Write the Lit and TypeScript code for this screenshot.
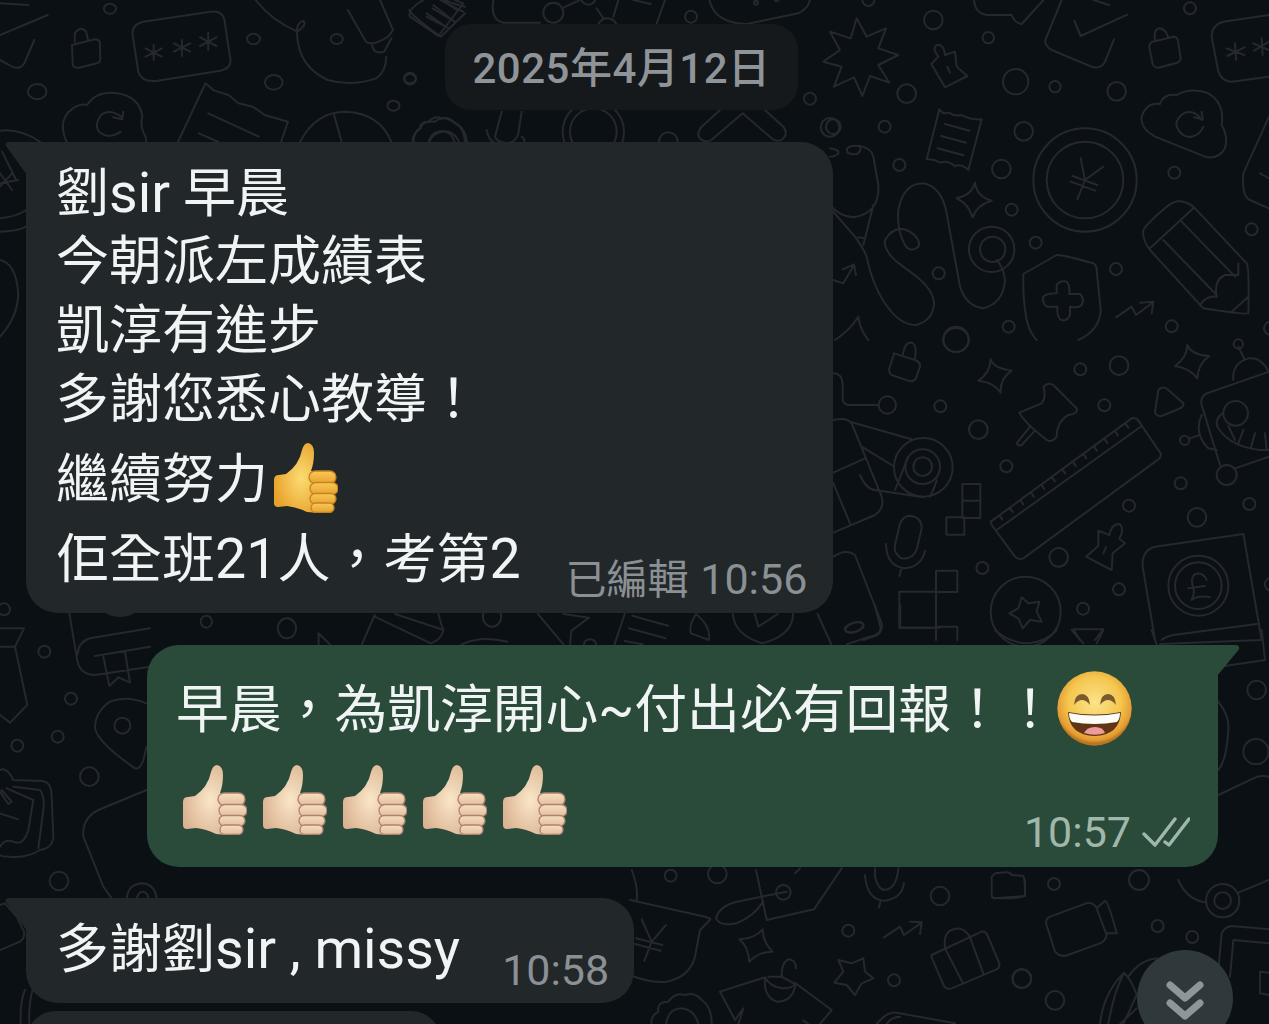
import { LitElement, html, css, svg } from "lit";
import { customElement } from "lit/decorators.js";

type Group = { x: number; y: number; sx?: number; sy?: number; d: string; c?: number[][]; e?: number[][] };

const rulerTicks = Array.from({ length: 13 }, (_, i) => {
  const x = 508 + i * 31.5;
  const y = 526 - i * 23;
  return `M${x} ${y} L${x + 9} ${y + 13}`;
}).join(" ");

const groups: Group[] = [
  // top left
  { x: 0, y: 0, sx: 2.473, sy: 3,
    d: `M0 105 L118 45 M85 120 L60 190 Q50 210 30 200 L0 180 M0 10 L70 15
    M178 135 L235 118 Q245 118 247 128 L248 178 Q248 188 240 190 L195 203 Q182 204 180 195 Z M185 125 L185 100 Q200 75 213 95 L218 122
    M355 65 L520 35 Q550 30 555 60 L570 180 Q572 205 545 212 L390 242 Q350 248 342 215 L328 105 Q325 72 355 65Z
    M380 135 L380 180 M360 145 L400 170 M400 145 L360 170 M450 120 L450 168 M430 130 L470 155 M470 130 L430 155 M515 98 L515 150 M495 112 L535 138 M535 112 L495 138
    M165 426 Q140 360 180 325 Q200 310 215 315 Q240 270 290 280 Q345 290 352 350 Q345 380 360 410 L362 426
    M300 350 Q270 325 250 345 Q232 375 245 395 Q270 420 298 395 M305 335 L302 358 L280 352
    M440 426 L508 250 L530 272 L565 285 L590 310 L625 320 L655 345 L712 365 L695 426 M515 340 L640 410 M492 400 L540 426
    M742 426 Q780 335 855 335 Q940 340 968 426 M825 340 L845 426
    M632 0 Q670 60 735 95 Q760 75 750 62 Q730 70 735 110 Q740 200 810 240 Q870 260 930 235 Q955 215 955 170
    M860 30 L905 125 Q920 140 960 110 L972 90 L940 0 M920 135 Q925 165 950 155 L968 115
    M1020 426 Q1020 400 1040 385 Q1045 360 1075 365 Q1095 345 1120 365 Q1150 380 1155 426 M1060 426 Q1075 390 1110 395 Q1130 405 1135 426
    M1012 30 Q1020 50 1090 110 L1150 40 M1055 50 L1110 85 M1070 25 L1125 65 M1090 0 L1145 35 M1100 0 Q1130 15 1150 20
    M0 392 Q50 385 100 426 M0 560 L30 520 M0 520 L30 570 M5 455 L40 540 M0 550 L45 540
    M0 655 Q40 650 65 630 M0 695 Q40 695 65 680
    M0 780 Q40 790 45 880 Q45 950 0 1010`,
    c: [[272, 26, 15], [627, 117, 16], [833, 117, 15], [677, 247, 22], [1014, 236, 14], [92, 275, 23], [973, 317, 15]] },
  // zone under the date chip
  { x: 400, y: 0,
    d: `M70 0 Q20 30 30 50 L115 108 L190 10 L165 0 M80 40 L130 75 M100 15 L150 55 M125 0 L170 30
    M280 0 Q270 60 310 68 L420 68 M485 25 L540 0 M590 25 L610 55 M655 0 L640 50 M700 0 L752 12 M795 0 L770 70
    M928 0 Q945 70 1040 72 L1195 40 Q1225 25 1230 0
    M40 435 Q40 395 60 385 Q60 365 85 365 Q105 345 125 355 Q150 350 165 370 Q195 385 195 435 M85 435 Q90 395 125 393 Q160 395 165 435
    M260 390 Q265 420 285 430 M305 335 L285 410 Q290 425 320 430 Q350 425 355 400 L365 335 M365 410 Q378 420 370 430
    M960 330 L905 380 Q885 405 905 420 Q925 430 940 415 L1028 340 L1115 415 Q1135 430 1150 415 Q1165 400 1150 380 L1095 330`,
    c: [[460, 38, 30], [622, 85, 30], [873, 50, 18], [30, 236, 18], [1230, 296, 18], [1290, 382, 28], [805, 425, 28], [565, -8, 22], [580, 395, 92], [580, 395, 70], [1068, 8, 6], [1130, -2, 6]] },
  // top right
  { x: 830, y: 0,
    d: `M80 55 L110 110 L168 85 L145 145 L205 165 L145 195 L178 248 L120 228 L97 288 L72 232 L12 260 L35 200 L-20 185 L30 150 L0 95 L62 115Z
    M304 192 L345 262 L412 228 L380 200 L375 155 L345 165 Q340 130 320 135 Q305 145 325 170 Z M352 200 L360 218
    M328 328 Q340 345 355 338 Q375 350 395 345 Q420 360 455 358 L415 510 Q395 490 375 498 Q350 480 330 488 Q310 475 290 478 Z M345 372 L418 392 M333 408 L408 428 M323 445 L400 466
    M752 475 L765 540 L820 500 M765 540 L742 598 M728 528 L802 555 M722 545 L795 572
    M990 312 Q1000 280 1040 285 Q1080 262 1130 278 Q1185 305 1175 375 Q1195 410 1185 445 Q1165 480 1125 470 L975 410 Q930 385 935 350 Q950 305 990 312Z
    M1115 360 Q1095 330 1065 338 Q1035 355 1040 380 Q1055 415 1085 410 Q1110 405 1120 380 M1115 335 L1118 358 L1092 352
    M968 125 L1030 110 Q1042 110 1044 122 L1052 175 Q1052 185 1042 188 L985 203 Q972 203 968 192 L958 142 Q958 128 968 125 M975 120 Q970 85 990 85 Q1010 90 1015 115
    M1180 65 L1317 45 M1180 65 Q1145 75 1145 110 L1165 215 Q1175 245 1205 245 L1317 230
    M1215 130 L1218 180 M1190 145 L1243 165 M1243 142 L1192 168 M1295 115 L1298 165 M1270 130 L1317 150 M1317 125 L1272 152
    M695 0 L648 115 Q640 135 665 150 L790 202 Q815 205 825 185 L852 118 M733 62 L752 108 L892 44 M790 0 L838 15
    M432 0 Q435 40 470 45 L545 45 Q555 70 575 72 L640 0
    M0 445 Q30 450 25 460 Q15 470 0 470 M52 445 Q60 435 90 438 Q125 445 130 470 L145 555 Q150 640 70 652 Q30 650 0 615 M52 445 Q45 465 80 462 Q95 455 90 438
    M130 615 L100 735 M5 630 L75 710 Q100 745 110 770 Q130 870 180 930 Q215 975 260 975 Q310 960 312 910 Q310 870 260 830 L200 785 Q160 750 165 720 Q195 670 240 695 Q275 720 265 740 Q240 760 225 735 Q200 690 205 630 Q220 550 280 550 Q335 560 350 640 L390 860 Q410 920 460 925 Q520 910 525 840 Q520 800 500 780
    M85 712 L105 715
    M435 548 Q440 590 485 602 Q440 615 428 652 Q415 610 380 595 Q425 585 435 548Z
    M580 822 L680 765 Q690 762 790 790 Q800 795 800 810 L812 930 Q810 990 745 1020 M580 822 Q578 900 590 960 Q600 1000 620 1020
    M680 880 L680 855 Q690 840 710 845 Q720 855 718 882 L750 882 Q765 895 755 915 Q745 925 720 920 L720 945 Q710 965 695 960 Q680 955 682 920 L650 920 Q635 905 640 890 Q650 880 680 880Z
    M858 952 L905 920 L918 945 L968 908 M930 908 L970 905 L965 940
    M10 840 L40 850 L72 795 M38 808 L72 793 L78 825
    M1045 603 Q1075 605 1095 625 L1250 790 Q1258 800 1255 940 Q1250 945 1120 925 L960 750 Q935 715 940 690 Q950 670 1010 620 Q1030 605 1045 603Z
    M960 745 L1090 625 M1000 720 L1160 885 M1055 665 L1215 830 M1110 915 Q1130 885 1160 890 Q1150 840 1185 825 L1225 825 L1225 790 M1205 935 L1255 890
    M1317 350 L1240 520 Q1235 590 1260 600 L1317 625 M1290 520 L1317 535
    M15 1020 Q60 990 85 950 Q90 990 115 1020`,
    c: [[310, 60, 28], [475, 113, 17], [230, 281, 28], [557, 245, 38], [675, 260, 17], [860, 274, 28], [1080, 25, 18], [115, 0, 18], [164, 380, 18], [10, 380, 22], [208, 495, 18], [581, 394, 28], [514, 507, 28], [545, 629, 18], [617, 728, 18], [326, 820, 18], [858, 807, 18], [1033, 518, 18], [1265, 688, 18], [536, 980, 18], [1025, 979, 18], [378, 1018, 38], [765, 540, 155], [765, 540, 115], [485, 748, 68], [488, 748, 38], [1322, 985, 20]] },
  // right middle
  { x: 830, y: 340,
    d: `M192 40 L260 62 Q272 70 270 80 L258 115 Q250 128 235 122 L185 105 Q175 98 178 85 L190 48 Z M218 45 Q225 5 245 8 Q262 15 255 55
    M482 58 Q490 85 545 92 Q510 115 512 158 Q490 125 445 122 Q480 100 482 58Z
    M1072 15 Q1085 45 1138 48 Q1105 70 1102 115 Q1080 85 1035 78 Q1070 55 1072 15Z
    M568 218 L635 190 Q650 170 640 140 Q655 125 670 135 L740 205 Q745 222 715 225 Q680 245 680 290 Q665 310 650 300 Q580 245 568 218Z M600 260 L560 310 Q565 320 575 315 L612 275
    M985 150 Q1000 135 1015 150 L1060 190 Q1062 200 1050 205 L995 228 Q978 230 975 215 Z
    M482 545 L905 235 Q918 232 925 242 L992 340 Q995 350 985 358 L580 655 Q565 660 555 650 L485 555 Z M500 570 L935 258 ${rulerTicks}
    M397 432 H451 V482 H397Z M397 482 H451 V534 H397Z M349 532 H403 V584 H349Z
    M238 527 Q275 530 275 565 L260 630 Q245 660 215 655 Q190 640 195 615 L210 550 Q220 528 238 527Z M168 612 Q170 680 225 685 Q275 680 285 632 M215 685 L208 708
    M318 692 H382 V756 H318Z M208 755 H318 V863 H208Z M318 755 L318 900 M318 860 L382 860 L382 900
    M575 772 L595 790 L628 785 L620 815 L635 845 L600 840 L578 865 L565 835 L538 820 L565 805Z
    M730 868 L820 868 L795 900 M730 868 L750 900
    M805 572 Q825 580 838 585 Q845 550 868 552 Q885 565 868 596 L885 610 L848 640 L845 690 L768 650 L805 618 Z M828 622 L820 640
    M10 100 Q35 100 38 130 L38 180 Q42 195 60 195 L145 195
    M10 240 Q50 230 65 250 L155 470 Q165 505 135 525 L10 578 M60 245 L245 298
    M10 398 L105 355 M95 320 L190 378 M60 550 L10 430 M90 405 Q110 450 135 450 L280 472 M195 450 L235 350 M300 470 Q315 440 320 420
    M10 650 Q50 625 75 645 L155 850 Q160 880 130 890 L100 900
    M975 620 L1240 582 L1295 900 M975 620 Q935 630 938 680 L975 900 M1280 852 L1030 885 Q1005 890 995 900
    M1130 720 Q1120 695 1095 702 Q1080 715 1090 745 Q1095 760 1085 780 Q1105 765 1140 772 M1075 745 L1125 738
    M1130 160 L1317 95 M1130 160 Q1110 170 1115 195 L1170 375 M1215 385 L1317 350
    M1210 120 Q1205 70 1255 55 Q1295 50 1315 95 M1225 20 L1242 55
    M1178 220 Q1150 240 1165 265 Q1200 320 1290 330 L1317 330 M1195 258 L1215 300 M1240 270 L1225 310 M1275 280 L1262 325 M1305 280 L1310 330
    M1115 225 Q1090 280 1135 325 L1160 330 M1080 295 L1108 285`,
    c: [[751, 88, 18], [867, 77, 28], [823, 196, 18], [331, 199, 18], [445, 269, 28], [529, 379, 18], [1225, 12, 14], [897, 497, 18], [1052, 430, 18], [1258, 492, 18], [1101, 532, 28], [686, 652, 28], [457, 684, 18], [867, 748, 18], [759, 806, 18], [172, 195, 26], [1322, 733, 18], [1064, 301, 14], [1190, 405, 30], [587, 815, 105], [1105, 737, 90], [1105, 737, 70], [280, 382, 88], [278, 380, 52], [278, 380, 28], [1217, 220, 37]],
    e: [[73, 862, 28, 14, -20], [378, 0, 38, 36, 0]] },
  // left strip
  { x: 0, y: 600,
    d: `M0 85 L72 85 L45 140 L82 315 L30 368 L0 345 M0 140 L45 140
    M208 40 L230 170 Q235 225 285 225 L450 200 M450 85 L270 115 Q235 125 232 165 M285 168 L450 140 M310 170 L328 258 L355 232 L390 248 L375 155
    M440 310 Q380 285 330 305 Q285 335 285 385 Q295 430 405 505 Q420 510 430 480 L440 440
    M0 510 Q20 500 40 540 L125 543 Q155 545 155 590 L160 715 Q155 745 120 750 Q80 775 30 770 Q0 770 0 765 M40 560 L120 570 Q135 590 130 630 L115 745 M20 565 L100 600 L85 690 Q70 740 40 725 Q15 715 0 740 M0 640 L55 658 M5 570 L35 605 L25 612 L0 575
    M440 570 L295 630 Q245 655 250 710 L310 860 L335 895 M380 895 Q385 850 430 850 Q465 855 470 895 M410 895 Q415 875 430 875 Q445 880 445 895
    M0 915 L15 910 L50 950 L72 995 Q75 1015 60 1025 L0 1050
    M75 1170 Q60 1200 62 1272 M100 1160 Q85 1210 88 1272`,
    c: [[12, 28, 18], [133, 155, 18], [213, 296, 18], [173, 410, 18], [52, 437, 18], [268, 530, 28], [177, 843, 28], [367, 377, 24]] },
  // strip between first and second bubble
  { x: 140, y: 605, sx: 1.96, sy: 3,
    d: `M460 30 L435 118 M460 35 L570 115 Q590 105 595 75 L500 27 M585 27 Q590 60 595 75
    M350 118 L350 85 L372 118 M780 27 L830 118 M880 38 L845 78 L843 118 M830 27 L880 38
    M950 27 L930 118 M965 32 L1035 62 M958 70 L1030 100 M950 108 L985 118
    M1090 27 Q1075 60 1080 85 L1115 105 Q1120 65 1090 27
    M1162 27 Q1165 90 1220 115 Q1280 90 1280 27 M1205 27 L1212 65 L1250 27
    M1328 27 L1355 118 M1440 0 L1452 70 Q1450 90 1430 95 L1385 118 M1490 0 L1490 68 L1568 68
    M630 118 Q670 90 720 110`,
    e: [[130, 50, 11, 18, 0], [288, 70, 18, 30, 0], [690, 35, 18, 30, 0], [882, 118, 12, 15, 0], [1400, 67, 20, 13, -30]] },
  // right of second bubble
  { x: 960, y: 630,
    d: `M775 215 Q810 260 805 300 Q800 390 775 420 M775 495 L880 445 Q900 435 927 440
    M575 0 L590 45 M600 42 L905 30 M915 90 L780 110 M905 0 L915 90
    M105 0 Q150 40 205 40 Q260 35 290 0 M335 0 L370 40 M430 0 L410 40`,
    c: [[890, 180, 28], [888, 365, 38]] },
  // bottom right
  { x: 1000, y: 880,
    d: `M75 0 L75 45 Q70 55 0 55
    M150 110 L265 68 Q285 70 290 85 L320 165 Q315 185 300 190 L195 228 Q175 228 165 215 L138 130 Q138 115 150 110Z M290 85 L315 62 Q325 65 350 160 L320 160
    M535 0 Q560 60 620 68 M715 38 L807 0
    M655 270 L665 160 Q675 140 695 138 L807 148 M690 290 L700 180 L807 190
    M300 432 Q310 340 372 278 Q395 300 410 345 L370 432 M325 432 Q340 340 372 278 M385 290 Q420 240 470 235 M410 385 L360 432
    M780 340 L780 275 L807 278 M780 340 L807 345`,
    c: [[162, 12, 18], [417, 0, 30], [473, 138, 18], [577, 171, 18], [66, 296, 28], [165, 361, 28], [668, 62, 50], [668, 62, 25]] },
  // bottom centre
  { x: 630, y: 860,
    d: `M0 120 L225 170 Q245 175 240 180 L210 210 L195 290 Q180 350 110 365 Q60 370 0 345
    M35 178 L65 245 L108 195 M65 245 L43 303 M18 235 L97 255 M15 252 L92 272 M5 30 Q25 80 20 120
    M378 30 L410 180 L552 148 L635 25 M495 40 L510 25
    M470 95 L320 125 Q265 140 258 175 Q270 200 320 190 Q370 170 400 125
    M398 208 Q400 250 428 275 Q385 275 358 305 Q355 260 328 238 Q375 235 398 208Z
    M735 25 L735 50 Q745 90 765 90 Q800 85 805 25 M705 45 Q710 120 765 122 Q815 115 822 70 M752 122 L747 142
    M1095 40 L1125 37 Q1140 35 1145 45 L1180 48 Q1185 55 1185 108 L1095 115 Q1085 115 1085 105 L1085 50 Z
    M762 232 L810 200 L822 225 L875 188 M840 185 L875 187 L870 222
    M905 285 L1055 215 Q1065 212 1072 225 L1108 310 Q1110 322 1100 328 L965 385 Q950 390 942 378 L905 292 Z M945 265 L998 368 M1020 232 L1060 340 M945 265 Q940 225 960 212 Q985 200 1000 210 Q1015 220 1020 232
    M625 300 L665 310 L700 295 L705 335 L730 355 L695 370 L675 405 L650 375 L613 368 L640 335Z
    M270 395 L405 352 Q420 380 455 385 Q490 385 497 370 L605 450 L570 492 M270 395 L315 480 L340 445 L325 492 M405 355 Q400 410 440 425 Q490 425 497 370
    M455 350 Q455 300 480 298 Q500 305 497 325 M415 350 L455 350 L495 372
    M65 492 Q60 470 85 455 Q80 425 115 425 Q135 395 165 405 Q195 395 215 420 Q245 440 245 490 M108 492 Q115 445 155 445 Q195 450 205 492
    M740 492 Q770 455 800 458 L975 490 M770 492 Q785 470 810 470 M520 482 L535 492`,
    c: [[122, 47, 18], [262, 42, 28], [930, 108, 28], [655, 212, 18], [792, 361, 18], [1175, 356, 28], [460, 97, 22]] },
];

function thumb(tone: "y" | "l") {
  const p = tone === "y"
    ? { a: "#fbdc74", b: "#e8a22a", f: "#f8c957", f2: "#e9a230", s: "#c4831f" }
    : { a: "#f9e7c8", b: "#dcb494", f: "#f6dfc0", f2: "#e4bd9c", s: "#ad8370" };
  const g = `th-${tone}`;
  return html`<svg class="thumb" viewBox="0 0 65 70" aria-hidden="true">
    <defs>
      <radialGradient id=${g} cx="0.58" cy="0.5" r="0.6">
        <stop offset="0" stop-color=${p.a}></stop><stop offset="1" stop-color=${p.b}></stop>
      </radialGradient>
      <linearGradient id="${g}-f" x1="0" x2="0" y1="0" y2="1">
        <stop offset="0" stop-color=${p.f}></stop><stop offset="1" stop-color=${p.f2}></stop>
      </linearGradient>
    </defs>
    <path fill="url(#${g})" d="M1 37 Q1 32 6 32 L13 31 Q26 22 29 7 Q31 0 35 0 Q41 1 41 10 Q41 20 38 28 L48 28 L46 70 L34 69 Q24 64 14 63 L5 64 Q1 64 1 60 Z"></path>
    <g fill="url(#${g}-f)" stroke=${p.s} stroke-width="1.3">
      <rect x="36" y="28" width="27" height="12.5" rx="6.2"></rect>
      <rect x="37" y="39.5" width="28" height="12" rx="6"></rect>
      <rect x="37" y="50.5" width="26" height="10.5" rx="5.2"></rect>
      <rect x="38" y="60" width="23" height="9.5" rx="4.7"></rect>
    </g>
  </svg>`;
}

function grin() {
  return html`<svg class="grin" viewBox="0 0 75 75" aria-hidden="true">
    <defs>
      <radialGradient id="gr" cx="0.5" cy="0.42" r="0.55">
        <stop offset="0" stop-color="#fbe48a"></stop><stop offset="0.65" stop-color="#f4c64e"></stop>
        <stop offset="0.92" stop-color="#e59a33"></stop><stop offset="1" stop-color="#b8761f"></stop>
      </radialGradient>
    </defs>
    <circle cx="37.5" cy="37.5" r="37.2" fill="url(#gr)"></circle>
    <path d="M17 34 Q18 23 25 23 Q32 23 33 34 Q29 29 25 29 Q21 29 17 34Z" fill="#7c5a2c"></path>
    <path d="M43 34 Q44 23 51 23 Q58 23 59 34 Q55 29 51 29 Q47 29 43 34Z" fill="#7c5a2c"></path>
    <path d="M11 41 Q37.5 46 64 41 Q63 64 37.5 65 Q12 64 11 41Z" fill="#5f3516"></path>
    <path d="M12 42 Q37.5 47 63 42 Q63 48 60 51 Q37.5 55 15 51 Q12 48 12 42Z" fill="#fbfbf7"></path>
    <path d="M27 62 Q30 56 38 56 Q46 56 48 62 Q38 65.5 27 62Z" fill="#f09a9c"></path>
  </svg>`;
}

@customElement("app-root")
export class AppRoot extends LitElement {
  static styles = css`
    :host {
      display: block;
      position: relative;
      width: 1269px;
      height: 1024px;
      overflow: hidden;
      background: #0b1014;
      font-family: Roboto, "Noto Sans CJK TC", sans-serif;
      color: #f1f4f4;
    }
    .doodles {
      position: absolute;
      inset: 0;
      width: 1269px;
      height: 1024px;
    }
    .doodles path,
    .doodles circle,
    .doodles ellipse {
      fill: none;
      stroke: #25292d;
      stroke-width: 2px;
      stroke-linecap: round;
      stroke-linejoin: round;
      vector-effect: non-scaling-stroke;
    }
    .doodles .bump {
      fill: #22272a;
      stroke: none;
    }
    .chat {
      position: relative;
      display: flex;
      flex-direction: column;
      align-items: flex-start;
      padding: 24px 0 0 26px;
    }
    .date {
      margin: 0 0 32px 419px;
      width: 353px;
      height: 86px;
      box-sizing: border-box;
      padding-bottom: 6px;
      border-radius: 26px;
      background: #15191c;
      color: #8f9498;
      font-size: 42px;
      font-weight: 500;
      letter-spacing: 0.5px;
      display: flex;
      align-items: center;
      justify-content: center;
    }
    .bubble {
      position: relative;
      background: #22272a;
      border-radius: 0 32px 32px 32px;
      font-size: 53px;
      white-space: nowrap;
    }
    .lat { font-size: 55.5px; }
    .bubble.in::before {
      content: "";
      position: absolute;
      left: -21px;
      top: 0;
      width: 22px;
      height: 33px;
      background: inherit;
      clip-path: path("M22 0 H5 Q-1 0 1 4 L22 33 Z");
    }
    .bubble.out {
      background: #2a4b3a;
      border-radius: 32px 0 32px 32px;
      margin-left: 121px;
      width: 1071px;
      height: 222px;
      box-sizing: border-box;
      padding: 20px 28px 0 29px;
      margin-top: 32px;
      font-size: 52.8px;
    }
    .bubble.out::after {
      content: "";
      position: absolute;
      right: -22px;
      top: 0;
      width: 23px;
      height: 31px;
      background: inherit;
      clip-path: path("M0 0 H18 Q23 0 22 4 Q21 6 19 8 L0 31 Z");
    }
    .first { padding: 17px 26px 19px 30px; }
    .third { padding: 17px 25px 19px 30px; margin-top: 31px; }
    .stub {
      width: 415px;
      height: 60px;
      margin-top: 8px;
      border-radius: 32px;
    }
    .line { height: 69px; line-height: 69px; }
    .line-emoji { height: 90px; line-height: 69px; display: flex; align-items: center; }
    .thumb { width: 65px; height: 70px; flex: none; display: block; }
    .inline-thumb { margin: 0 0 5px 5px; display: flex; }
    .row-end {
      display: flex;
      align-items: flex-end;
      justify-content: space-between;
    }
    .gap-a { gap: 45px; }
    .gap-b { gap: 42px; }
    .meta {
      font-size: 43px;
      line-height: 42px;
      color: #8b9094;
      display: flex;
      align-items: center;
      gap: 11px;
    }
    .edited { font-size: 41px; margin-right: 1px; }
    .drop-7 { margin-bottom: -7px; }
    .drop-8 { margin-bottom: -8px; }
    .out .meta { color: #a0b8ac; }
    .grin { width: 75px; height: 75px; flex: none; margin: 0 0 3px 0; display: block; }
    .out-line { height: 90px; line-height: 69px; display: flex; align-items: center; }
    .thumbs-row { height: 90px; align-items: center; }
    .thumbs { display: flex; gap: 15px; padding-left: 6px; }
    .thumbs-row .meta { align-self: flex-end; }
    .check { width: 48px; height: 30px; display: block; }
    .down {
      position: absolute;
      left: 1137px;
      top: 950px;
      width: 96px;
      height: 96px;
      border-radius: 50%;
      background: #2f383b;
    }
    .down svg { width: 96px; height: 96px; display: block; }
  `;

  render() {
    return html`
      <svg class="doodles" viewBox="0 0 1269 1024" aria-hidden="true">
        <ellipse class="bump" cx="120" cy="612" rx="14" ry="5"></ellipse>
        ${groups.map(
          (g) => svg`<g transform="translate(${g.x} ${g.y}) scale(${1 / (g.sx ?? 3)} ${1 / (g.sy ?? 3)})">
            <path d=${g.d}></path>
            ${(g.c ?? []).map((c) => svg`<circle cx=${c[0]} cy=${c[1]} r=${c[2]}></circle>`)}
            ${(g.e ?? []).map(
              (e) => svg`<ellipse cx=${e[0]} cy=${e[1]} rx=${e[2]} ry=${e[3]} transform="rotate(${e[4]} ${e[0]} ${e[1]})"></ellipse>`
            )}
          </g>`
        )}
      </svg>
      <div class="chat">
        <div class="date">2025年4月12日</div>
        <div class="bubble in first">
          <div class="line">劉<span class="lat">sir</span> 早晨</div>
          <div class="line">今朝派左成績表</div>
          <div class="line">凱淳有進步</div>
          <div class="line">多謝您悉心教導！</div>
          <div class="line-emoji">繼續努力<span class="inline-thumb">${thumb("y")}</span></div>
          <div class="row-end gap-a">
            <div class="line">佢全班<span class="lat">21</span>人，考第<span class="lat">2</span></div>
            <div class="meta drop-7"><span><span class="edited">已編輯</span> 10:56</span></div>
          </div>
        </div>
        <div class="bubble out">
          <div class="out-line">早晨，為凱淳開心~付出必有回報！！${grin()}</div>
          <div class="row-end thumbs-row">
            <div class="thumbs">${[0, 1, 2, 3, 4].map(() => thumb("l"))}</div>
            <div class="meta drop-8">
              10:57
              <svg class="check" viewBox="0 0 48 30" aria-hidden="true" fill="none" stroke="#a0b8ac" stroke-width="3.4" stroke-linecap="round" stroke-linejoin="round">
                <path d="M2 17 L13 28 L33 2"></path>
                <path d="M23 25 L27 28 L47 2"></path>
              </svg>
            </div>
          </div>
        </div>
        <div class="bubble in third">
          <div class="row-end gap-b">
            <div class="line">多謝劉<span class="lat">sir , missy</span></div>
            <div class="meta drop-7">10:58</div>
          </div>
        </div>
        <div class="bubble stub"></div>
      </div>
      <div class="down">
        <svg viewBox="0 0 96 96" aria-hidden="true" fill="none" stroke="#8d9799" stroke-width="7" stroke-linecap="round" stroke-linejoin="round">
          <path d="M33 35 L48 48 L63 35"></path>
          <path d="M33 53 L48 66 L63 53"></path>
        </svg>
      </div>
    `;
  }
}
